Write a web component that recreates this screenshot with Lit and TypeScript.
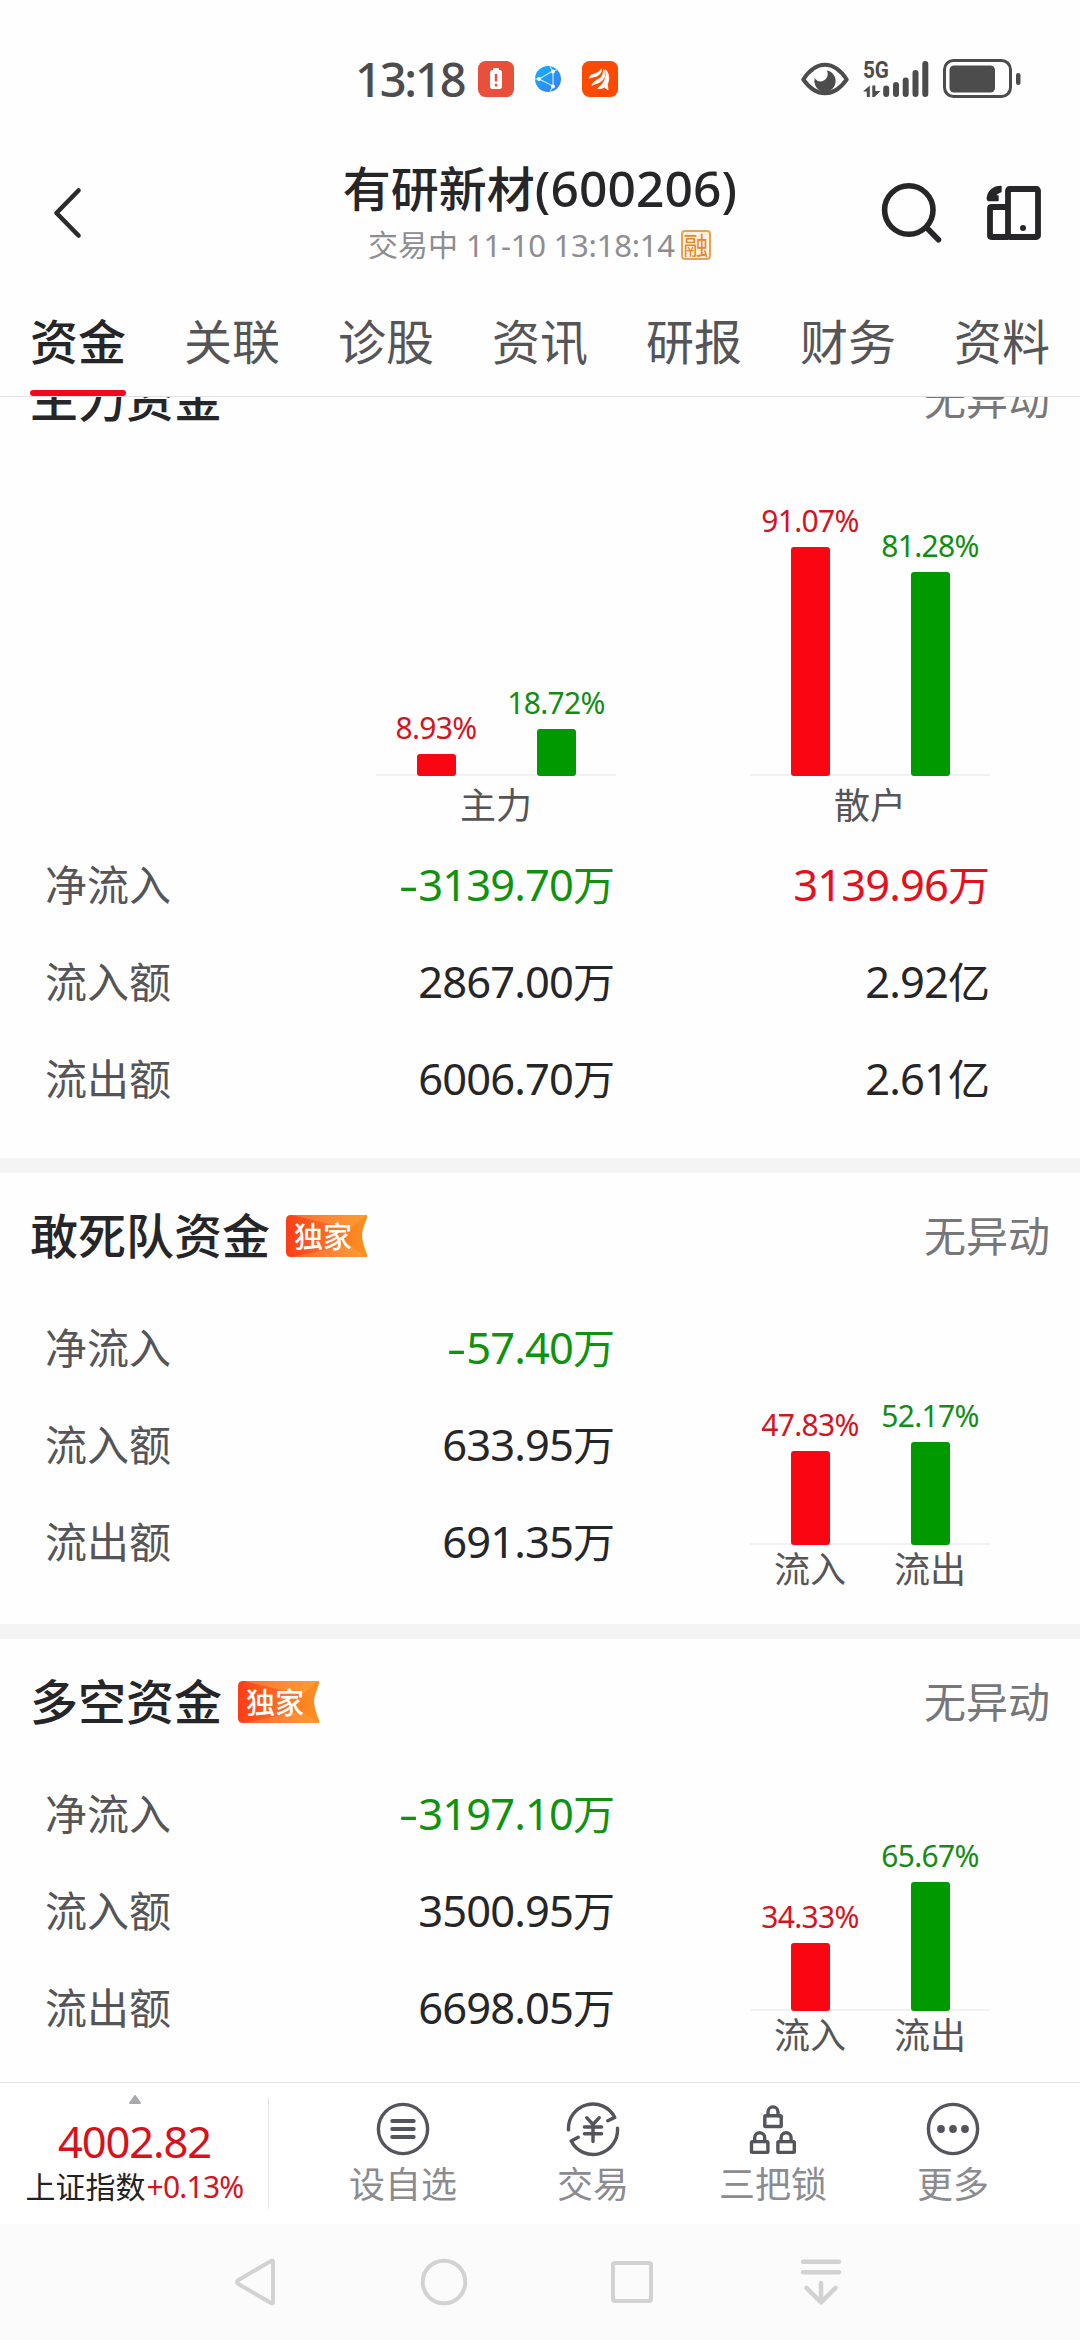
import { LitElement, html, svg, css, nothing } from "lit";
import { customElement, property } from "lit/decorators.js";

type Tone = "up" | "down" | "plain";
interface Bar { pct: number; tone: Tone; label?: string }
interface Row { label: string; values: { text: string; tone: Tone }[] }

const base = css`
  * { box-sizing: border-box; }
  :host { display: block; }
  .num { font-size: 1.035em; letter-spacing: -0.02em; line-height: 1; }
  .dash { display: inline-block; width: 0.46em; text-align: center; transform: scaleX(1.45); letter-spacing: 0; }
  .up { color: #e60f1c; }
  .down { color: #0f930f; }
  .plain { color: #262629; }
`;

/** Splits an amount such as "-57.40万" into sign, digits and unit. */
const amount = (text: string) => {
  const m = /^(-?)([\d.]+)(.*)$/.exec(text)!;
  return html`${m[1] ? html`<span class="dash">-</span>` : nothing}<span class="num">${m[2]}</span>${m[3]}`;
};

@customElement("status-bar")
class StatusBar extends LitElement {
  static styles = [base, css`
    .bar { height: 158px; padding: 57px 58px 0 355px; display: flex; align-items: flex-start; color: #4c4c4c; }
    .time { font-size: 47px; font-weight: 500; line-height: 44px; width: 123px; letter-spacing: -2.2px; white-space: nowrap; }
    .apps { display: flex; gap: 20px; align-items: center; height: 44px; }
    .apps .globe { margin: 0 1px; }
    .right { margin-left: auto; display: flex; align-items: flex-start; height: 44px; }
    svg { display: block; }
    .net { display: grid; grid-template-columns: 20px 46px; margin: 0 14px; height: 44px; position: relative; }
    .gen { position: absolute; left: 0; top: 2px; font: 700 24px/22px Roboto, sans-serif; transform: scaleX(0.86); transform-origin: left; }
  `];
  render() {
    return html`<div class="bar">
      <div class="time">13:18</div>
      <div class="apps">
        <svg width="36" height="36" viewBox="0 0 36 36"><rect width="36" height="36" rx="7.5" fill="#e8503c"/><rect x="15" y="7" width="6" height="3" rx="1" fill="#fff"/><rect x="12" y="9" width="12" height="19" rx="2.5" fill="#fff"/><path d="M18 13v7.5M18 22.8v2.6" stroke="#e8503c" stroke-width="2.4"/></svg>
        <svg class="globe" width="26" height="26" viewBox="0 0 26 26"><defs><linearGradient id="g" x1="0" y1="0" x2="1" y2="1"><stop offset="0" stop-color="#10b5fb"/><stop offset="1" stop-color="#3d78f6"/></linearGradient></defs><circle cx="13" cy="13" r="13" fill="url(#g)"/><path d="M4 13 17 5.5M4 13l14 7M18 5.5v15M4 13H0M18 20.5l-3 5M18 5.5l4-2M18 5.5l-3-5" fill="none" stroke="#bfe8ff" stroke-width="1.2"/><circle cx="4" cy="13" r="1.9" fill="#fff"/><circle cx="18" cy="5.5" r="1.9" fill="#fff"/><circle cx="18" cy="20.5" r="1.9" fill="#fff"/></svg>
        <svg width="36" height="36" viewBox="0 0 36 36"><rect width="36" height="36" rx="7.5" fill="#fd4a02"/><path d="M7 17.500C8 13.500 11 13.600 14 12.300 17 11 18.500 9.600 19.500 7.500 19.800 11 18 13.600 15 15 11.800 16.500 9.500 15.800 7 17.500ZM10 24.500C11 20 14.500 19.700 17.500 17.500 20.500 15.200 21.800 12 21.500 8 24 12.500 23 17 19.500 20 16.500 22.600 13.300 22.300 10 24.500ZM15.500 27.500C21.500 23 25.500 16.500 23.500 8.500 27.500 13 27.500 18.500 25.500 23L26 29C24.500 27.500 23.500 27 22.500 26.200 20.500 27.500 18 27.800 15.500 27.500Z" fill="#fff" stroke="#fff" stroke-width=".7" stroke-linejoin="round"/></svg>
      </div>
      <div class="right">
        <svg width="48" height="44" viewBox="0 0 48 44"><path d="M2.300 22.500Q12 7.800 24 7.800T45.700 22.500Q36 36.200 24 36.200T2.300 22.500Z" fill="none" stroke="#4c4c4c" stroke-width="4" stroke-linejoin="round"/><path d="M26 13.500a10.700 10.700 0 1 1-12.300 7.500c2.200 3.500 6 4.500 9 2.600 3.700-2.300 5-5.800 3.300-10.100Z" fill="#4c4c4c"/></svg>
        <div class="net">
          <span class="gen">5G</span>
          <svg width="66" height="44" viewBox="0 0 66 44"><path d="M0 34.500 6.800 28.500V40H3.800V34.500ZM9.300 28.500h3v5.500H17.500L11.500 40H9.300Z" fill="#4c4c4c"/><g stroke="#4c4c4c" stroke-width="6" stroke-linecap="round"><path d="M23.200 31.500V37M33 28V37M42.700 23.500V37M52.500 16V37M62.300 7V37"/></g></svg>
        </div>
        <svg width="79" height="44" viewBox="0 0 79 44"><rect x="1.500" y="3.500" width="66" height="36" rx="9" fill="none" stroke="#4c4c4c" stroke-width="3"/><rect x="6.500" y="8.500" width="45.500" height="27" rx="4.500" fill="#4c4c4c"/><rect x="73" y="16" width="4.500" height="12" rx="2.200" fill="#4c4c4c"/></svg>
      </div>
    </div>`;
  }
}

@customElement("stock-header")
class StockHeader extends LitElement {
  static styles = [base, css`
    .head { height: 127px; display: grid; grid-template-columns: 300px 480px 300px; }
    .title { font-size: 48px; line-height: 62px; height: 60px; font-weight: 500; color: #262629; text-align: center; white-space: nowrap; }
    .title .num { letter-spacing: 0.1px; }
    .meta { display: flex; align-items: center; height: 54px; padding-left: 68px; font-size: 30px; line-height: 54px; color: #8d8d92; white-space: nowrap; }
    .meta .num { letter-spacing: -0.25px; line-height: 54px; margin-left: 8px; }
    .margin { margin-left: 6px; width: 30px; height: 30px; border: 2px solid #e8a255; border-radius: 4px; background: #fff3e0; color: #e8862c; font-size: 25px; line-height: 25px; display: flex; align-items: center; justify-content: center; }
    svg { display: block; }
    .back { padding: 26px 0 0 50px; }
    .tools { display: flex; padding: 22px 0 0 98px; gap: 42px; }
    .tabs { height: 111px; padding: 0 30px; display: flex; justify-content: space-between; font-size: 48px; color: #555557; }
    .tab { padding-top: 17px; line-height: 80px; height: 111px; }
    .active { color: #262629; font-weight: 500; display: flex; flex-direction: column; }
    .active::after { content: ""; display: block; height: 6px; border-radius: 3px; background: #ee0a1a; margin-top: 8px; }
    .rule { height: 1px; background: #e2e2e2; }
  `];
  render() {
    return html`<div class="head">
      <div class="back"><svg width="40" height="58" viewBox="0 0 40 58"><path d="M28.500 6.500 6.500 29 28.500 51.500" fill="none" stroke="#2b2b2d" stroke-width="4.600" stroke-linecap="round" stroke-linejoin="round"/></svg></div>
      <div>
        <div class="title">有研新材<span class="num">(600206)</span></div>
        <div class="meta">交易中<span class="num">11-10 13:18:14</span><span class="margin">融</span></div>
      </div>
      <div class="tools">
        <svg width="66" height="66" viewBox="0 0 66 66"><circle cx="30.800" cy="30" r="24.200" fill="none" stroke="#262628" stroke-width="5.600"/><path d="m48.500 47.500 12 12.300" stroke="#262628" stroke-width="5.600" stroke-linecap="round"/></svg>
        <svg width="60" height="66" viewBox="0 0 60 66"><g fill="none" stroke="#262628" stroke-width="5.800" stroke-linejoin="round"><rect x="22" y="9" width="30" height="48" rx="1.500"/><path d="M22 27H5.500Q4 27 4 28.500V55.500Q4 57 5.500 57H22" /></g><circle cx="37" cy="48" r="3" fill="#262628"/><path d="M15 6.500V11.500Q10.500 12.800 8.800 16H12V20.500H3Q1.200 20.500 1.300 18C2 11.500 7 6.500 15 6.500Z" fill="#262628" stroke="#262628" stroke-width="1.400" stroke-linejoin="round"/></svg>
      </div>
    </div>
    <div class="tabs">${["资金", "关联", "诊股", "资讯", "研报", "财务", "资料"].map((t, i) =>
      html`<div class="tab ${i === 0 ? "active" : ""}">${t}</div>`)}</div>
    <div class="rule"></div>`;
  }
}

@customElement("flow-chart")
class FlowChart extends LitElement {
  @property({ attribute: false }) bars: Bar[] = [];
  @property({ type: Number }) scale = 1;
  @property() caption = "";
  static styles = [base, css`
    :host { width: 240px; }
    .plot { display: grid; grid-template-columns: 1fr 1fr; align-items: end; background: linear-gradient(#f1f1f1, #f1f1f1) bottom / 100% 2px no-repeat; }
    .col { display: flex; flex-direction: column; align-items: center; }
    .pct { font-size: 30px; line-height: 30px; margin-bottom: 11px; letter-spacing: -0.7px; }
    .pct.up { color: #d4141f; }
    .pct.down { color: #128c12; }
    .fill { width: 39px; border-radius: 3px; }
    .fill.up { background: #fa0512; }
    .fill.down { background: #009900; }
    .labels { display: grid; grid-auto-flow: column; grid-auto-columns: 1fr; text-align: center; font-size: 36px; line-height: 50px; color: #555557; }
    .wide { line-height: 60px; }
  `];
  render() {
    return html`<div class="plot">${this.bars.map(b => html`<div class="col">
        <div class="pct ${b.tone}">${b.pct.toFixed(2)}%</div>
        <div class="fill ${b.tone}" style="height:${b.pct * this.scale}px"></div>
      </div>`)}</div>
      ${this.caption
        ? html`<div class="labels wide"><span>${this.caption}</span></div>`
        : html`<div class="labels">${this.bars.map(b => html`<span>${b.label}</span>`)}</div>`}`;
  }
}

@customElement("fund-section")
class FundSection extends LitElement {
  @property() heading = "";
  @property({ type: Boolean }) exclusive = false;
  @property({ attribute: false }) rows: Row[] = [];
  static styles = [base, css`
    .head { height: 126px; padding: 0 30px; display: flex; align-items: center; }
    .name { font-size: 48px; line-height: 60px; font-weight: 500; color: #262629; }
    .state { margin-left: auto; font-size: 42px; line-height: 60px; color: #777779; }
    .tag { display: grid; width: 82px; height: 42px; margin-left: 16px; }
    .tag > * { grid-area: 1 / 1; }
    .tag svg { display: block; }
    .tag span { z-index: 1; padding-left: 8px; font-size: 29px; line-height: 43px; font-weight: 500; color: #fff; letter-spacing: 0; }
    .body { display: flex; }
    .table { width: 615px; }
    .table.full { width: 990px; }
    .row { height: 97px; display: grid; grid-template-columns: 285px 285px 375px; align-items: center; padding-left: 45px; font-size: 42px; line-height: 60px; color: #555557; white-space: nowrap; }
    .val { text-align: right; }
  `];
  render() {
    return html`<div class="head">
      <span class="name">${this.heading}</span>
      ${this.exclusive ? html`<div class="tag">
        <svg width="82" height="42" viewBox="0 0 82 42"><defs><linearGradient id="t" x1="0" x2="1" y1="0" y2="0"><stop offset="0" stop-color="#fc3d17"/><stop offset=".55" stop-color="#fd7028"/><stop offset="1" stop-color="#fb921f"/></linearGradient></defs><path d="M5 0H80Q82 0 81.300 2 76 15 76 20 76 27 81.300 40 82 42 80 42H5Q0 42 0 37V5Q0 0 5 0Z" fill="url(#t)"/><path d="M6 0H80L64 14Z" fill="#ffae4e" opacity=".4"/><path d="M6 42H80L64 30Z" fill="#ffb35a" opacity=".3"/></svg>
        <span>独家</span></div>` : nothing}
      <span class="state">无异动</span>
    </div>
    <slot name="top"></slot>
    <div class="body">
      <div class="table ${this.exclusive ? "" : "full"}">${this.rows.map(r => html`<div class="row"><span>${r.label}</span>${r.values.map(v =>
        html`<span class="val ${v.tone}">${amount(v.text)}</span>`)}</div>`)}</div>
      <slot name="side"></slot>
    </div>`;
  }
}

const ink = "#54555c";
const lock = (x: number, y: number) => svg`<g transform="translate(${x} ${y})"><rect x="-8.200" y="0" width="16.400" height="10.800" rx=".8"/><path d="M-5 0V-3.800a5 5 0 0 1 10 0V0"/></g>`;
const actions = [
  { label: "设自选", icon: svg`<circle r="24.600"/><path d="M-10.800-8H10.800M-10.800 0H10.800M-10.800 8H10.800" stroke-width="3.800"/>` },
  { label: "交易", icon: svg`<path d="M-24.500.8A24.500 24.500 0 0 1 21.800-11.600L14.800-8.300M24.500-.8A24.500 24.500 0 0 1-21.800 12L-14.800 8.300"/><path d="M-6.300-11.300 0-4.500 6.300-11.300M-8.600-2H8.600M-8.600 4.700H8.600M0-4.500V12.500"/>` },
  { label: "三把锁", icon: svg`${lock(0, -13.3)}${lock(-13.3, 12.6)}${lock(13.1, 12.6)}` },
  { label: "更多", icon: svg`<circle r="24.600"/><g fill="${ink}" stroke="none"><circle cx="-12" r="3.900"/><circle r="3.900"/><circle cx="12" r="3.900"/></g>` },
];

@customElement("bottom-bar")
class BottomBar extends LitElement {
  static styles = [base, css`
    :host { background: #fff; }
    .bar { height: 142px; border-top: 1px solid #e0e0e0; display: flex; }
    .index { width: 269px; padding-left: 1px; height: 111px; margin-top: 15px; border-right: 1px solid #e2e2e2; display: flex; flex-direction: column; align-items: center; }
    .index svg { display: block; margin-top: -3px; }
    .price { font-size: 43.5px; line-height: 46px; letter-spacing: -1.1px; margin-top: 14px; }
    .chg { font-size: 30px; line-height: 40px; margin-top: 3px; white-space: nowrap; color: #222224; }
    .chg .up { color: #d4141f; letter-spacing: -0.8px; margin-left: 1px; }
    .price.up { color: #d8121d; }
    .acts { display: flex; padding-left: 44px; }
    .act { width: 180px; display: flex; flex-direction: column; align-items: center; font-size: 36px; line-height: 48px; color: #8b8b90; }
    .act:first-child { margin-right: 10px; }
    .act svg { display: block; margin: 18px 0 4px; }
    .sys { height: 116px; background: #fbfbfb; padding: 0 161px; display: grid; grid-template-columns: repeat(4, 188.5px); align-items: center; justify-items: center; }
    .sys svg { display: block; }
  `];
  render() {
    const sys = [
      svg`<path d="M16.500-21.300Q18-22 18-20V20Q18 22 16.500 21.300L-17 1.800Q-19-.1-17-1.800Z"/>`,
      svg`<circle r="21.300"/>`,
      svg`<rect x="-19" y="-19" width="38" height="38" rx="2"/>`,
      svg`<path d="M-18-20.300H18M-18-9.800H18M0 1V20M-14.500 5.800 0 20.300 14.500 5.800" stroke-width="4.500"/>`,
    ];
    return html`<div class="bar">
      <div class="index">
        <svg width="12" height="9" viewBox="0 0 12 9"><path d="M6 1 11 8H1Z" fill="#a9a9ad" stroke="#a9a9ad" stroke-width="2" stroke-linejoin="round"/></svg>
        <div class="price up">4002.82</div>
        <div class="chg">上证指数<span class="up">+0.13%</span></div>
      </div>
      <div class="acts">${actions.map(a => html`<div class="act">
        <svg width="56" height="56" viewBox="-28 -28 56 56" fill="none" stroke=${ink} stroke-width="3.400" stroke-linecap="round" stroke-linejoin="round">${a.icon}</svg>
        <span>${a.label}</span></div>`)}</div>
    </div>
    <div class="sys">${sys.map(s => html`<svg width="52" height="52" viewBox="-26 -26 52 52" fill="none" stroke="#d2d2d2" stroke-width="4" stroke-linecap="round" stroke-linejoin="round">${s}</svg>`)}</div>`;
  }
}

const rows = (...cols: string[][]): Row[] => ["净流入", "流入额", "流出额"].map((label, i) => ({
  label,
  values: cols.map(c => ({ text: c[i], tone: i > 0 ? "plain" : c[i].startsWith("-") ? "down" : "up" } as const)),
}));

@customElement("app-root")
class AppRoot extends LitElement {
  static styles = css`
    :host { display: flex; flex-direction: column; width: 1080px; height: 2340px; overflow: hidden; background: #fefefe; font-family: "Noto Sans", "Noto Sans CJK SC", sans-serif; }
    status-bar, stock-header, bottom-bar { flex: none; }
    .scroll { flex: 1; min-height: 0; overflow: hidden; }
    .first { margin-top: -61px; height: 822px; }
    .other { height: 451px; }
    .gap { height: 15px; background: #f4f4f4; }
    .pair { height: 374px; display: flex; align-items: flex-end; justify-content: flex-end; gap: 134px; padding-right: 90px; }
    .side { align-self: flex-end; margin: 0 0 -5px 135px; }
  `;
  render() {
    const pair = (a: number, b: number): Bar[] => [
      { pct: a, tone: "up", label: "流入" }, { pct: b, tone: "down", label: "流出" }];
    return html`
      <status-bar></status-bar>
      <stock-header></stock-header>
      <div class="scroll">
        <fund-section class="first" heading="主力资金"
          .rows=${rows(["-3139.70万", "2867.00万", "6006.70万"], ["3139.96万", "2.92亿", "2.61亿"])}>
          <div slot="top" class="pair">
            <flow-chart .bars=${pair(8.93, 18.72)} scale="2.512" caption="主力"></flow-chart>
            <flow-chart .bars=${pair(91.07, 81.28)} scale="2.512" caption="散户"></flow-chart>
          </div>
        </fund-section>
        <div class="gap"></div>
        <fund-section class="other" heading="敢死队资金" exclusive .rows=${rows(["-57.40万", "633.95万", "691.35万"])}>
          <flow-chart slot="side" class="side" .bars=${pair(47.83, 52.17)} scale="1.972"></flow-chart>
        </fund-section>
        <div class="gap"></div>
        <fund-section class="other" heading="多空资金" exclusive .rows=${rows(["-3197.10万", "3500.95万", "6698.05万"])}>
          <flow-chart slot="side" class="side" .bars=${pair(34.33, 65.67)} scale="1.972"></flow-chart>
        </fund-section>
      </div>
      <bottom-bar></bottom-bar>`;
  }
}
